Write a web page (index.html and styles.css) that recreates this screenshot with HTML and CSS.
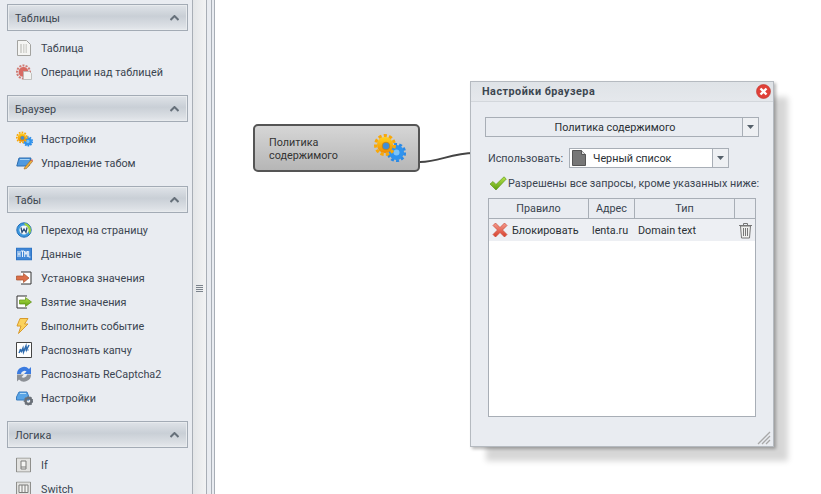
FILE: index.html
```html
<!DOCTYPE html>
<html lang="ru">
<head>
<meta charset="utf-8">
<title>Настройки браузера</title>
<link rel="stylesheet" href="styles.css">
</head>
<body>
<svg class="defs" width="0" height="0">
  <defs>
    <linearGradient id="gOrange" x1="0" y1="0" x2="0" y2="1"><stop offset="0" stop-color="#ffd21e"/><stop offset="1" stop-color="#f08a00"/></linearGradient>
    <linearGradient id="gBlue" x1="0" y1="0" x2="0" y2="1"><stop offset="0" stop-color="#5cc0ff"/><stop offset="1" stop-color="#0f6fd8"/></linearGradient>
    <linearGradient id="gRed" x1="0" y1="0" x2="0" y2="1"><stop offset="0" stop-color="#f59a8c"/><stop offset="1" stop-color="#d8402c"/></linearGradient>
    <linearGradient id="gGreen" x1="0" y1="0" x2="0" y2="1"><stop offset="0" stop-color="#b6e44a"/><stop offset="1" stop-color="#5c9e10"/></linearGradient>
    <symbol id="gears" viewBox="0 0 32 30">
      <circle cx="22.500" cy="19.500" r="7.500" fill="#2f93ee"/>
      <circle cx="22.500" cy="19.500" r="8.300" fill="none" stroke="#2a8ae6" stroke-width="2.600" stroke-dasharray="3 2.200"/>
      <circle cx="22.500" cy="19.500" r="3" fill="#7cc4f8"/>
      <circle cx="11" cy="12" r="8" fill="url(#gOrange)"/>
      <circle cx="11" cy="12" r="9.500" fill="none" stroke="#f8a808" stroke-width="3" stroke-dasharray="3.200 2.200"/>
      <circle cx="12" cy="13" r="3.800" fill="#3f8ed8" stroke="#d08400" stroke-width=".8"/>
    </symbol>
    <symbol id="redx" viewBox="0 0 16 16">
      <path d="M1 3.500 3.500 1 8 5.500 12.500 1 15 3.500 10.500 8 15 12.500 12.500 15 8 10.500 3.500 15 1 12.500 5.500 8z" fill="url(#gRed)" stroke="#c94a38" stroke-width=".7"/>
    </symbol>
  </defs>
</svg>
<div class="app">
  <aside class="sidebar">
    <section class="group">
      <header class="group-head"><span>Таблицы</span><svg class="chev" width="9" height="6" viewBox="0 0 9 6"><path d="M0.500 5 4.500 1l4 4" fill="none" stroke="#66707a" stroke-width="2"/></svg></header>
      <ul class="items">
        <li class="item">
          <svg class="ico" width="16" height="18" viewBox="0 0 16 18"><path d="M1.500 1.500h9l4 4v11h-13z" fill="#f5f5f3" stroke="#a3a3a0"/><path d="M4 5h7v9H4z" fill="#d4d4d0"/><path d="M6.500 5v9M9 5v9" stroke="#f5f5f3"/></svg>
          <span>Таблица</span>
        </li>
        <li class="item">
          <svg class="ico" width="16" height="16" viewBox="0 0 16 16"><circle cx="7.500" cy="8" r="5" fill="#d86a62"/><circle cx="7.500" cy="8" r="6.500" fill="none" stroke="#d07a72" stroke-width="2" stroke-dasharray="2 1.200"/><path d="M7.500 7.500h6l2 2v6h-8z" fill="#f2f2f0" stroke="#b5b5b2" stroke-width=".8"/></svg>
          <span>Операции над таблицей</span>
        </li>
      </ul>
    </section>
    <section class="group">
      <header class="group-head"><span>Браузер</span><svg class="chev" width="9" height="6" viewBox="0 0 9 6"><path d="M0.500 5 4.500 1l4 4" fill="none" stroke="#66707a" stroke-width="2"/></svg></header>
      <ul class="items">
        <li class="item">
          <svg class="ico" width="17" height="16" viewBox="0 0 32 30"><use href="#gears"/></svg>
          <span>Настройки</span>
        </li>
        <li class="item">
          <svg class="ico" width="17" height="16" viewBox="0 0 17 16"><path d="M3 3h12L13 11H0.800z" fill="#4f9ae0" stroke="#2d6cae"/><path d="M4 4.500h9.500" stroke="#a8d4f5"/><path d="M9 12l6-7 1.500 1.500-6 7L8 14z" fill="#f0b040" stroke="#9c6a1c" stroke-width=".6"/><path d="M15 5l1-1 1 1.500-1 1z" fill="#d8605c"/></svg>
          <span>Управление табом</span>
        </li>
      </ul>
    </section>
    <section class="group">
      <header class="group-head"><span>Табы</span><svg class="chev" width="9" height="6" viewBox="0 0 9 6"><path d="M0.500 5 4.500 1l4 4" fill="none" stroke="#66707a" stroke-width="2"/></svg></header>
      <ul class="items">
        <li class="item">
          <svg class="ico" width="16" height="16" viewBox="0 0 16 16"><circle cx="8" cy="8" r="7.200" fill="#3c98de" stroke="#1f6cb8"/><path d="M8 1a7 7 0 0 1 7 7 7 7 0 0 1-1.500 4.300L12 8.500 9 3z" fill="#9ad03c"/><circle cx="8" cy="8" r="4.600" fill="#f2f6f8"/><path d="M5 5.500 6 10.500 8 7l2 3.500 1-5" fill="none" stroke="#2b4f78" stroke-width="1.300"/></svg>
          <span>Переход на страницу</span>
        </li>
        <li class="item">
          <svg class="ico" width="16" height="13" viewBox="0 0 16 13"><path d="M0 0h16v13H0z" fill="#2f74c4"/><path d="M1 1h14v11H1z" fill="#3f86d6"/><path d="M2 3.500v6M2 6.500h2M4 3.500v6M5 3.500h3M6.500 3.500v6M8.700 9.500v-6l1.300 3.500 1.300-3.500v6M12.700 3.500v6h1.700" fill="none" stroke="#fff" stroke-width=".9"/></svg>
          <span>Данные</span>
        </li>
        <li class="item">
          <svg class="ico" width="16" height="14" viewBox="0 0 16 14"><path d="M5 1h10v12H5" fill="#fff" stroke="#333"/><path d="M0.500 5h7V2.500L13 7l-5.500 4.500V9h-7z" fill="#dc6f4a" stroke="#a8502c" stroke-width=".7"/></svg>
          <span>Установка значения</span>
        </li>
        <li class="item">
          <svg class="ico" width="16" height="14" viewBox="0 0 16 14"><path d="M11 1H1v12h10" fill="#fff" stroke="#333"/><path d="M3.500 5h6V2.500L15.500 7l-6 4.500V9h-6z" fill="url(#gGreen)" stroke="#5c8c14" stroke-width=".7"/></svg>
          <span>Взятие значения</span>
        </li>
        <li class="item">
          <svg class="ico" width="13" height="16" viewBox="0 0 13 16"><path d="M4 .5h8L8.500 6H12L2.500 15.500 5 8H1z" fill="#fbd25c" stroke="#d89a2c"/></svg>
          <span>Выполнить событие</span>
        </li>
        <li class="item">
          <svg class="ico" width="16" height="16" viewBox="0 0 16 16"><path d="M.5.500h15v15H.500z" fill="#fff" stroke="#444"/><path d="M3 11l1.500-3 1 1.500L7 6l.5 4L10 4l.5 4L13 3" fill="none" stroke="#2e6cb0" stroke-width="1.500"/><path d="M3 8h10" stroke="#2e6cb0" stroke-width=".7"/></svg>
          <span>Распознать капчу</span>
        </li>
        <li class="item">
          <svg class="ico" width="16" height="16" viewBox="0 0 16 16"><path d="M1 8a7 7 0 0 1 12-5l2-2v7h-7l2.500-2.500A3.500 3.500 0 0 0 5 8z" fill="#3b7be0"/><path d="M15 8.500a7 7 0 0 1-12 5l-2 2v-7h7L5.500 11A3.500 3.500 0 0 0 11 8.500z" fill="#8c9096"/></svg>
          <span>Распознать ReCaptcha2</span>
        </li>
        <li class="item">
          <svg class="ico" width="17" height="15" viewBox="0 0 17 15"><path d="M3 1.500h8l2 5v3H0.500v-3z" fill="#58a4e6" stroke="#3a7cc0"/><path d="M4 3h6" stroke="#b4dcf8"/><circle cx="12.500" cy="10.500" r="3" fill="none" stroke="#6a7078" stroke-width="2.400"/><circle cx="12.500" cy="10.500" r="4.200" fill="none" stroke="#6a7078" stroke-width="1.200" stroke-dasharray="1.500 1.500"/></svg>
          <span>Настройки</span>
        </li>
      </ul>
    </section>
    <section class="group">
      <header class="group-head"><span>Логика</span><svg class="chev" width="9" height="6" viewBox="0 0 9 6"><path d="M0.500 5 4.500 1l4 4" fill="none" stroke="#66707a" stroke-width="2"/></svg></header>
      <ul class="items">
        <li class="item">
          <svg class="ico" width="15" height="15" viewBox="0 0 15 15"><path d="M.5.500h14v14H.500z" fill="#e2e2e0" stroke="#8f8f8c"/><path d="M5 3.500h5v8H5z" fill="#f4f4f2" stroke="#7c7c7a"/><path d="M5 9.500h5" stroke="#7c7c7a"/></svg>
          <span>If</span>
        </li>
        <li class="item">
          <svg class="ico" width="15" height="15" viewBox="0 0 15 15"><path d="M.5.500h14v14H.500z" fill="#e2e2e0" stroke="#8f8f8c"/><path d="M3 3.500h9V11H3zM6 3.500V11M9 3.500V11" fill="#f4f4f2" stroke="#7c7c7a"/></svg>
          <span>Switch</span>
        </li>
      </ul>
    </section>
  </aside>
  <div class="splitter" aria-hidden="true"><i></i><i></i><i></i><i></i></div>
  <div class="strip"></div>
  <main class="canvas">
    <svg class="wire" width="60" height="30" viewBox="0 0 60 30"><path d="M0 23C20 23 30 14 55 14" fill="none" stroke="#444" stroke-width="2"/></svg>
    <div class="node">
      <span class="node-label">Политика<br>содержимого</span>
      <svg class="node-ico" width="32" height="30" viewBox="0 0 32 30"><use href="#gears"/></svg>
    </div>
    <div class="dialog">
      <header class="dlg-title">
        <span>Настройки браузера</span>
        <svg width="15" height="15" viewBox="0 0 15 15"><circle cx="7.500" cy="7.500" r="7" fill="#e04038" stroke="#c03028" stroke-width=".6"/><path d="M4.500 4.500l6 6M10.500 4.500l-6 6" stroke="#fff" stroke-width="2.400"/></svg>
      </header>
      <div class="dlg-body">
        <div class="select wide">
          <span class="select-value center">Политика содержимого</span>
          <span class="select-btn"><svg width="7" height="4" viewBox="0 0 7 4"><path d="M0 0h7L3.500 4z" fill="#55606a"/></svg></span>
        </div>
        <div class="use-row">
          <label class="use-label">Использовать:</label>
          <div class="select combo">
            <span class="select-value">
              <svg width="14" height="16" viewBox="0 0 14 16"><path d="M.5.500h9l4 4v11H.500z" fill="#777" stroke="#555"/><path d="M9.500.500v4h4" fill="#ddd" stroke="#555"/></svg>
              <span>Черный список</span>
            </span>
            <span class="select-btn"><svg width="7" height="4" viewBox="0 0 7 4"><path d="M0 0h7L3.500 4z" fill="#55606a"/></svg></span>
          </div>
        </div>
        <div class="hint">
          <svg class="hint-ico" width="18" height="15" viewBox="0 0 18 15"><path d="M1 8l3-2.500 3 3L15 .8 17.300 3 7 14z" fill="url(#gGreen)" stroke="#5f9a1c" stroke-width=".7"/></svg>
          <span>Разрешены все запросы, кроме указанных ниже:</span>
        </div>
        <div class="rules">
          <div class="rules-head">
            <span>Правило</span><span>Адрес</span><span>Тип</span><span></span>
          </div>
          <div class="rules-row">
            <span class="rule-name"><svg width="16" height="16" viewBox="0 0 16 16"><use href="#redx"/></svg>Блокировать</span>
            <span>lenta.ru</span>
            <span>Domain text</span>
            <svg class="trash" width="15" height="17" viewBox="0 0 15 17"><path d="M1 3.500h13M5.500 3V1.500h4V3" fill="none" stroke="#777"/><path d="M2.500 4l1 12h8l1-12z" fill="#f0f0ee" stroke="#777"/><path d="M5.500 6v8M7.500 6v8M9.500 6v8" stroke="#777"/></svg>
          </div>
        </div>
      </div>
      <svg class="grip" width="14" height="14" viewBox="0 0 14 14"><path d="M1 13 13 1M5 13l8-8M9 13l4-4" stroke="#a8a8a8" stroke-width="1.300"/></svg>
    </div>
  </main>
</div>
</body>
</html>
```
FILE: styles.css
```css
* { box-sizing: border-box; }
html, body { margin: 0; height: 100%; overflow: hidden; background: #fff; }
body {
  font-family: Roboto, "Noto Sans", sans-serif;
  font-size: 10.8px;
  color: #3a4450;
}
.defs { position: absolute; }
.app { display: flex; height: 494px; width: 821px; overflow: hidden; }

.sidebar {
  width: 193px;
  flex: none;
  background: #e9ecf1;
  border-right: 1px solid #a8aeb6;
  padding: 4px 4px 0 7px;
  overflow: hidden;
}
.group { margin-bottom: 11px; }
.group-head {
  height: 27px;
  display: flex;
  align-items: center;
  justify-content: space-between;
  padding: 1px 8px 0 7px;
  border: 1px solid #a3abb5;
  box-shadow: inset 0 0 0 1px #e8ebee;
  background: linear-gradient(#dfe3e8, #c9cfd6 45%, #dce0e5 85%, #e6e9ed);
  color: #3c4650;
}
.chev { display: block; }
.items { list-style: none; margin: 0; padding: 5px 0 0; }
.item {
  height: 24px;
  position: relative;
  display: flex;
  align-items: center;
  padding: 0 0 0 34px;
  white-space: nowrap;
}
.ico { position: absolute; left: 9px; top: 50%; transform: translateY(-50%); }

.splitter {
  width: 14px;
  flex: none;
  background: linear-gradient(90deg, #e4e6e8, #f2f3f4);
  border-right: 1px solid #a8aeb6;
  display: flex;
  flex-direction: column;
  justify-content: center;
  align-items: center;
  gap: 1px;
  padding-top: 82px;
}
.splitter i { display: block; width: 7px; height: 1px; background: #7b838c; }
.strip {
  width: 8px;
  flex: none;
  background: #e9ecf1;
  border-right: 1px solid #a8aeb6;
  position: relative;
}
.strip::before {
  content: "";
  position: absolute;
  left: 4px; top: 0; bottom: 0;
  width: 1px;
  background: #a8aeb6;
}

.canvas { flex: 1; position: relative; background: #fff; }
.wire { position: absolute; left: 205px; top: 139px; }
.node {
  position: absolute;
  left: 38px; top: 124px;
  width: 167px; height: 48px;
  border: 2px solid #555;
  border-radius: 5px;
  background: linear-gradient(#d6d6d6, #b6b6b6);
  display: flex;
  align-items: center;
  justify-content: space-between;
  padding: 0 12px 0 14px;
  color: #333;
  line-height: 13px;
}
.node-label { padding-top: 1px; }
.node-ico { flex: none; }
.dialog {
  position: absolute;
  left: 255px; top: 81px;
  width: 304px; height: 366px;
  background: #e9ecf1;
  border: 1px solid #b5bac0;
  box-shadow: 2px 2px 3px rgba(0,0,0,.28), 15px 15px 6px -1px rgba(0,0,0,.16);
  display: flex;
  flex-direction: column;
}
.dlg-title {
  height: 20px;
  flex: none;
  display: flex;
  align-items: center;
  justify-content: space-between;
  padding: 0 2px 0 11px;
  background: linear-gradient(#dfe3e7, #e5e8ec);
  border-bottom: 1px solid #d3d7dc;
  font-weight: 700;
  letter-spacing: .5px;
  color: #3c4650;
}
.dlg-body {
  flex: 1;
  padding: 15px 14px 0 14px;
  display: flex;
  flex-direction: column;
}
.select {
  display: flex;
  height: 20px;
  border: 1px solid #a8aeb6;
  align-items: stretch;
}
.wide { width: 274px; background: #e9ecf1; }
.combo { width: 160px; background: #fff; }
.select-value {
  flex: 1;
  display: flex;
  align-items: center;
  gap: 7px;
  padding: 0 0 0 2px;
  color: #2a2f35;
}
.center { justify-content: center; }
.select-btn {
  width: 16px;
  flex: none;
  display: flex;
  align-items: center;
  justify-content: center;
  border-left: 1px solid #a8aeb6;
  background: #eef0f3;
}
.use-row {
  display: flex;
  align-items: center;
  margin: 11px 0 0 3px;
}
.use-label { width: 81px; flex: none; }
.hint {
  display: flex;
  align-items: center;
  gap: 1px;
  margin: 8px 0 0 4px;
  height: 15px;
  white-space: nowrap;
}
.hint-ico { flex: none; }
.rules {
  margin: 7px 0 0 3px;
  width: 268px;
  height: 219px;
  border: 1px solid #a8aeb6;
  background: #fff;
}
.rules-head, .rules-row {
  display: grid;
  grid-template-columns: 100px 46px 100px 1fr;
  align-items: center;
}
.rules-head {
  height: 20px;
  background: #e9ecf1;
  border-bottom: 1px solid #a8aeb6;
  text-align: center;
  align-items: stretch;
  line-height: 20px;
}
.rules-head span { border-right: 1px solid #a8aeb6; }
.rules-head span:last-child { border-right: 0; }
.rules-row {
  height: 22px;
  background: #edeff3;
  color: #2a2f35;
}
.rules-row span:nth-child(2) { padding-left: 3px; }
.rules-row span:nth-child(3) { padding-left: 3px; }
.rule-name { display: flex; align-items: center; gap: 4px; padding-left: 3px; }
.trash { justify-self: center; }
.grip { position: absolute; right: 2px; bottom: 1px; }
```
